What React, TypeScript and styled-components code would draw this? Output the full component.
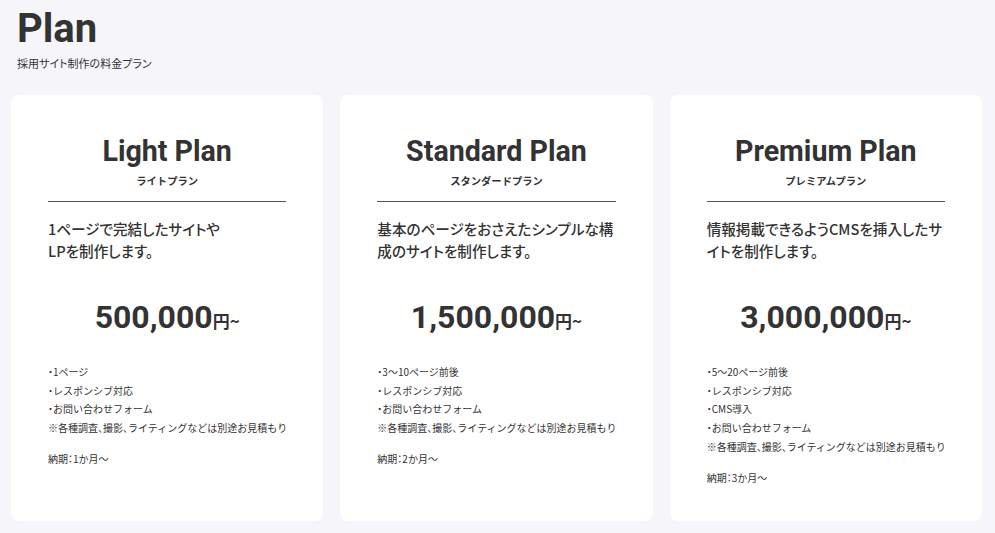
import React from "react";
import styled, { createGlobalStyle } from "styled-components";

const GlobalStyle = createGlobalStyle`
  html, body { margin: 0; padding: 0; background: #f6f6fa; }
  body { font-family: Roboto, "Noto Sans CJK JP", sans-serif; color: #333; }
  * { box-sizing: border-box; }
`;

const Page = styled.div`
  padding: 0 13px 12px 11px;
  background: #f6f6fa;
`;

const Header = styled.header`
  padding: 0 0 0 6px;
`;

const Title = styled.h1`
  margin: 0;
  padding-top: 5px;
  font-family: Roboto, sans-serif;
  font-weight: 700;
  font-size: 40px;
  line-height: 48px;
  color: #333;
`;

const Subtitle = styled.p`
  margin: 2px 0 0;
  font-family: "Noto Sans CJK JP", sans-serif;
  font-size: 11px;
  line-height: 16px;
  color: #333;
  font-feature-settings: "palt";
`;

const Grid = styled.div`
  margin-top: 24px;
  display: grid;
  grid-template-columns: repeat(3, minmax(0, 1fr));
  gap: 17px;
`;

const Card = styled.section`
  background: #fff;
  border-radius: 8px;
  padding: 38px 37px 40px;
  height: 426px;
  min-width: 0;
`;

const PlanName = styled.h2`
  margin: 0;
  text-align: center;
  font-family: Roboto, sans-serif;
  font-weight: 700;
  font-size: 28.6px;
  line-height: 36px;
  color: #333;
`;

const PlanKana = styled.div`
  text-align: center;
  font-family: "Noto Sans CJK JP", sans-serif;
  font-weight: 700;
  font-size: 10.3px;
  line-height: 14px;
  margin-top: 5px;
  padding-bottom: 13px;
  border-bottom: 1px solid #555;
`;

const Description = styled.p`
  margin: 16px 0 0;
  font-family: "Noto Sans CJK JP", sans-serif;
  font-weight: 500;
  font-size: 14.6px;
  line-height: 22px;
  white-space: nowrap;
  font-feature-settings: "palt";
`;

const Price = styled.div`
  margin-top: 35px;
  text-align: center;
  font-family: Roboto, sans-serif;
  font-weight: 700;
  font-size: 32px;
  line-height: 40px;
`;

const Yen = styled.span`
  font-family: "Noto Sans CJK JP", sans-serif;
  font-size: 17px;
  font-weight: 700;
`;

const Features = styled.ul`
  list-style: none;
  margin: 22px 0 0;
  padding: 0;
  font-family: "Noto Sans CJK JP", sans-serif;
  font-size: 10px;
  line-height: 18.7px;
  white-space: nowrap;
`;

const Feature = styled.li`
  margin: 0;
`;

const Delivery = styled.p`
  margin: 12px 0 0;
  font-family: "Noto Sans CJK JP", sans-serif;
  font-size: 10px;
  line-height: 18px;
`;

const Punct = styled.span`
  font-feature-settings: "halt";
`;

const PUNCT = /([、・：])/;

function Tight({ text }: { text: string }) {
  return (
    <>
      {text.split(PUNCT).map((part, i) =>
        PUNCT.test(part) ? <Punct key={i}>{part}</Punct> : <React.Fragment key={i}>{part}</React.Fragment>
      )}
    </>
  );
}

type Plan = {
  name: string;
  kana: string;
  desc: string[];
  price: string;
  features: string[];
  delivery: string;
};

const plans: Plan[] = [
  {
    name: "Light Plan",
    kana: "ライトプラン",
    desc: ["1ページで完結したサイトや", "LPを制作します。"],
    price: "500,000",
    features: ["・1ページ", "・レスポンシブ対応", "・お問い合わせフォーム", "※各種調査、撮影、ライティングなどは別途お見積もり"],
    delivery: "納期：1か月〜",
  },
  {
    name: "Standard Plan",
    kana: "スタンダードプラン",
    desc: ["基本のページをおさえたシンプルな構", "成のサイトを制作します。"],
    price: "1,500,000",
    features: ["・3〜10ページ前後", "・レスポンシブ対応", "・お問い合わせフォーム", "※各種調査、撮影、ライティングなどは別途お見積もり"],
    delivery: "納期：2か月〜",
  },
  {
    name: "Premium Plan",
    kana: "プレミアムプラン",
    desc: ["情報掲載できるようCMSを挿入したサ", "イトを制作します。"],
    price: "3,000,000",
    features: ["・5〜20ページ前後", "・レスポンシブ対応", "・CMS導入", "・お問い合わせフォーム", "※各種調査、撮影、ライティングなどは別途お見積もり"],
    delivery: "納期：3か月〜",
  },
];

export default function App() {
  return (
    <>
      <GlobalStyle />
      <Page>
        <Header>
          <Title>Plan</Title>
          <Subtitle>採用サイト制作の料金プラン</Subtitle>
        </Header>
        <Grid>
          {plans.map((p) => (
            <Card key={p.name}>
              <PlanName>{p.name}</PlanName>
              <PlanKana>{p.kana}</PlanKana>
              <Description>
                {p.desc[0]}
                <br />
                {p.desc[1]}
              </Description>
              <Price>
                {p.price}
                <Yen>円~</Yen>
              </Price>
              <Features>
                {p.features.map((f) => (
                  <Feature key={f}>
                    <Tight text={f} />
                  </Feature>
                ))}
              </Features>
              <Delivery>
                <Tight text={p.delivery} />
              </Delivery>
            </Card>
          ))}
        </Grid>
      </Page>
    </>
  );
}
